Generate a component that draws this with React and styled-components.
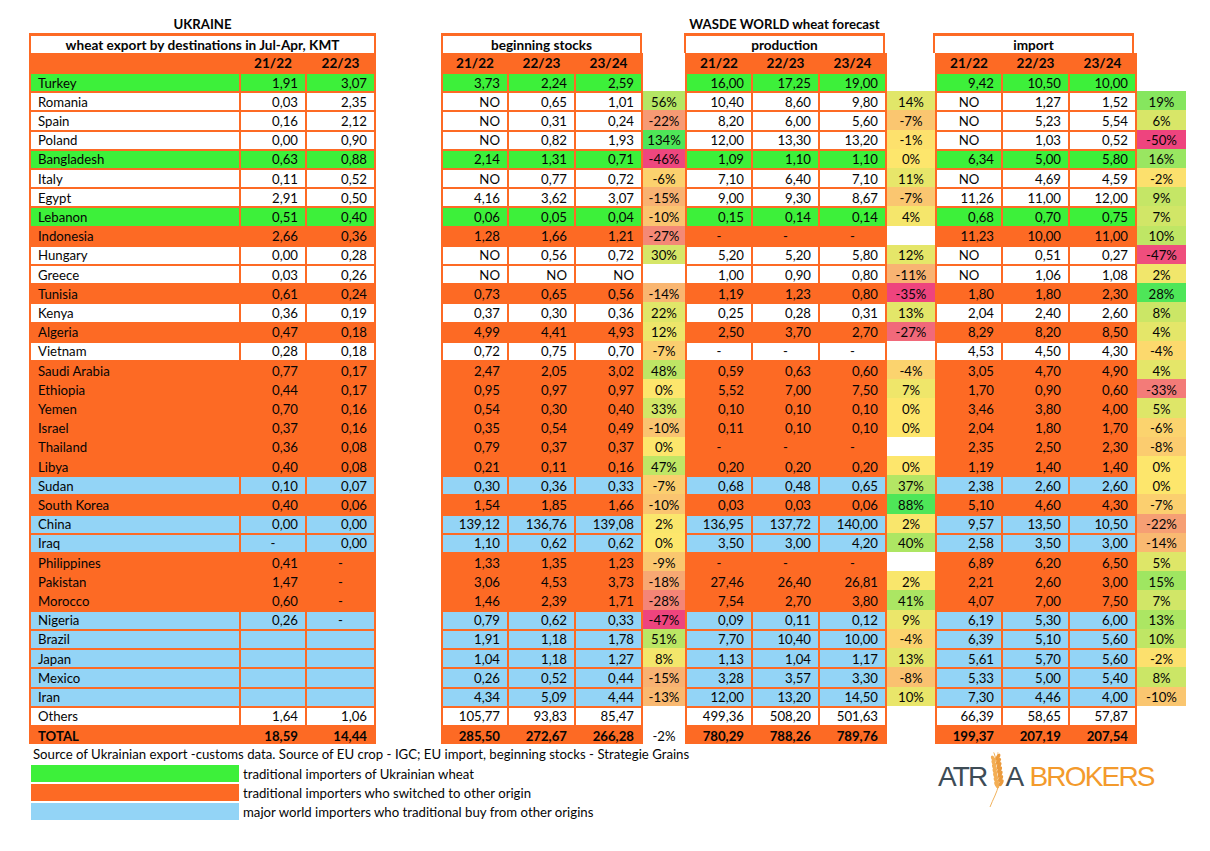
import React from 'react';
import styled, { createGlobalStyle } from 'styled-components';

const ORANGE = '#fd6a24';
const FILL = { g: '#3df03a', o: ORANGE, b: '#93d4f6', w: '#ffffff' };
const ROW_H = 19.21;

const GlobalStyle = createGlobalStyle`
  body {
    margin: 0;
    background: #fff;
  }
`;

const Page = styled.div`
  width: 1210px;
  height: 851px;
  box-sizing: border-box;
  padding: 14px 0 0 29px;
  font-family: Lato, "Open Sans", sans-serif;
  font-size: 13.2px;
  color: #050505;
  overflow: hidden;
`;

const Row = styled.div`
  display: flex;
  height: ${p => p.$h}px;
`;

const Title = styled.div`
  width: ${p => p.$w}px;
  display: flex;
  align-items: center;
  justify-content: center;
  font-weight: 700;
`;

const Spacer = styled.div`
  width: ${p => p.$w}px;
  flex: none;
`;

const Block = styled.div`
  display: flex;
  gap: 2px;
  flex: none;
  background: ${ORANGE};
  padding: ${p => p.$pt}px 2px 0;
  box-sizing: border-box;
`;

const Cell = styled.div`
  width: ${p => p.$w}px;
  flex: none;
  display: flex;
  align-items: center;
  justify-content: ${p => p.$align || 'flex-end'};
  padding: 0 7px;
  box-sizing: border-box;
  background: ${p => p.$bg};
  font-weight: ${p => (p.$bold ? 700 : 400)};
  white-space: nowrap;
`;

const HeadCell = styled(Cell)`
  justify-content: center;
  font-weight: 700;
  font-size: 13.6px;
`;

const Pct = styled.div`
  width: ${p => p.$w}px;
  flex: none;
  display: flex;
  align-items: center;
  justify-content: center;
  padding-top: 2px;
  box-sizing: border-box;
  background: ${p => p.$bg || 'transparent'};
`;

const Footer = styled.div`
  display: flex;
  padding-left: 2px;
`;

const Notes = styled.div`
  width: 907px;
  flex: none;
`;

const Source = styled.div`
  height: 20px;
  display: flex;
  align-items: center;
  padding-left: 2px;
`;

const Legend = styled.div`
  display: flex;
  flex-direction: column;
  gap: 2px;
  padding-top: 1px;
`;

const LegendItem = styled.div`
  display: flex;
  align-items: center;
  height: 17px;
`;

const Swatch = styled.div`
  width: 208px;
  height: 100%;
  background: ${p => p.$bg};
  margin-right: 4px;
`;

const Logo = styled.div`
  display: flex;
  align-items: flex-start;
  padding-top: 10px;
  font-family: "Liberation Sans", Arial, sans-serif;
  font-size: 28px;
  line-height: 28px;
  letter-spacing: -1.8px;
`;

const LogoText = styled.span`
  margin-top: 9px;
  margin-left: ${p => p.$ml || 0}px;
  color: ${p => p.$c};
  white-space: pre;
`;

const UA_W = [208, 64, 67];
const W = [64, 65, 65];
const PCT_W = [42, 48, 49];
const RANGE = [[-47, 134], [-35, 88], [-50, 28]];

const YEL = [253, 230, 108];
const GRN = [78, 230, 88];
const PNK = [238, 68, 126];

const mix = (a, b, t) =>
  `rgb(${a.map((v, i) => Math.round(v + (b[i] - v) * t)).join(',')})`;

const scale = (v, k) => {
  if (v === null) return null;
  const [min, max] = RANGE[k];
  return v >= 0 ? mix(YEL, GRN, v / max) : mix(YEL, PNK, v / min);
};

const rows = [
  ['Turkey', 'g', ['1,91', '3,07'], ['3,73', '2,24', '2,59'], null, ['16,00', '17,25', '19,00'], null, ['9,42', '10,50', '10,00'], null],
  ['Romania', 'w', ['0,03', '2,35'], ['NO', '0,65', '1,01'], 56, ['10,40', '8,60', '9,80'], 14, ['NO', '1,27', '1,52'], 19],
  ['Spain', 'w', ['0,16', '2,12'], ['NO', '0,31', '0,24'], -22, ['8,20', '6,00', '5,60'], -7, ['NO', '5,23', '5,54'], 6],
  ['Poland', 'w', ['0,00', '0,90'], ['NO', '0,82', '1,93'], 134, ['12,00', '13,30', '13,20'], -1, ['NO', '1,03', '0,52'], -50],
  ['Bangladesh', 'g', ['0,63', '0,88'], ['2,14', '1,31', '0,71'], -46, ['1,09', '1,10', '1,10'], 0, ['6,34', '5,00', '5,80'], 16],
  ['Italy', 'w', ['0,11', '0,52'], ['NO', '0,77', '0,72'], -6, ['7,10', '6,40', '7,10'], 11, ['NO', '4,69', '4,59'], -2],
  ['Egypt', 'w', ['2,91', '0,50'], ['4,16', '3,62', '3,07'], -15, ['9,00', '9,30', '8,67'], -7, ['11,26', '11,00', '12,00'], 9],
  ['Lebanon', 'g', ['0,51', '0,40'], ['0,06', '0,05', '0,04'], -10, ['0,15', '0,14', '0,14'], 4, ['0,68', '0,70', '0,75'], 7],
  ['Indonesia', 'o', ['2,66', '0,36'], ['1,28', '1,66', '1,21'], -27, ['-', '-', '-'], null, ['11,23', '10,00', '11,00'], 10],
  ['Hungary', 'w', ['0,00', '0,28'], ['NO', '0,56', '0,72'], 30, ['5,20', '5,20', '5,80'], 12, ['NO', '0,51', '0,27'], -47],
  ['Greece', 'w', ['0,03', '0,26'], ['NO', 'NO', 'NO'], null, ['1,00', '0,90', '0,80'], -11, ['NO', '1,06', '1,08'], 2],
  ['Tunisia', 'o', ['0,61', '0,24'], ['0,73', '0,65', '0,56'], -14, ['1,19', '1,23', '0,80'], -35, ['1,80', '1,80', '2,30'], 28],
  ['Kenya', 'w', ['0,36', '0,19'], ['0,37', '0,30', '0,36'], 22, ['0,25', '0,28', '0,31'], 13, ['2,04', '2,40', '2,60'], 8],
  ['Algeria', 'o', ['0,47', '0,18'], ['4,99', '4,41', '4,93'], 12, ['2,50', '3,70', '2,70'], -27, ['8,29', '8,20', '8,50'], 4],
  ['Vietnam', 'w', ['0,28', '0,18'], ['0,72', '0,75', '0,70'], -7, ['-', '-', '-'], null, ['4,53', '4,50', '4,30'], -4],
  ['Saudi Arabia', 'o', ['0,77', '0,17'], ['2,47', '2,05', '3,02'], 48, ['0,59', '0,63', '0,60'], -4, ['3,05', '4,70', '4,90'], 4],
  ['Ethiopia', 'o', ['0,44', '0,17'], ['0,95', '0,97', '0,97'], 0, ['5,52', '7,00', '7,50'], 7, ['1,70', '0,90', '0,60'], -33],
  ['Yemen', 'o', ['0,70', '0,16'], ['0,54', '0,30', '0,40'], 33, ['0,10', '0,10', '0,10'], 0, ['3,46', '3,80', '4,00'], 5],
  ['Israel', 'o', ['0,37', '0,16'], ['0,35', '0,54', '0,49'], -10, ['0,11', '0,10', '0,10'], 0, ['2,04', '1,80', '1,70'], -6],
  ['Thailand', 'o', ['0,36', '0,08'], ['0,79', '0,37', '0,37'], 0, ['-', '-', '-'], null, ['2,35', '2,50', '2,30'], -8],
  ['Libya', 'o', ['0,40', '0,08'], ['0,21', '0,11', '0,16'], 47, ['0,20', '0,20', '0,20'], 0, ['1,19', '1,40', '1,40'], 0],
  ['Sudan', 'b', ['0,10', '0,07'], ['0,30', '0,36', '0,33'], -7, ['0,68', '0,48', '0,65'], 37, ['2,38', '2,60', '2,60'], 0],
  ['South Korea', 'o', ['0,40', '0,06'], ['1,54', '1,85', '1,66'], -10, ['0,03', '0,03', '0,06'], 88, ['5,10', '4,60', '4,30'], -7],
  ['China', 'b', ['0,00', '0,00'], ['139,12', '136,76', '139,08'], 2, ['136,95', '137,72', '140,00'], 2, ['9,57', '13,50', '10,50'], -22],
  ['Iraq', 'b', ['-', '0,00'], ['1,10', '0,62', '0,62'], 0, ['3,50', '3,00', '4,20'], 40, ['2,58', '3,50', '3,00'], -14],
  ['Philippines', 'o', ['0,41', '-'], ['1,33', '1,35', '1,23'], -9, ['-', '-', '-'], null, ['6,89', '6,20', '6,50'], 5],
  ['Pakistan', 'o', ['1,47', '-'], ['3,06', '4,53', '3,73'], -18, ['27,46', '26,40', '26,81'], 2, ['2,21', '2,60', '3,00'], 15],
  ['Morocco', 'o', ['0,60', '-'], ['1,46', '2,39', '1,71'], -28, ['7,54', '2,70', '3,80'], 41, ['4,07', '7,00', '7,50'], 7],
  ['Nigeria', 'b', ['0,26', '-'], ['0,79', '0,62', '0,33'], -47, ['0,09', '0,11', '0,12'], 9, ['6,19', '5,30', '6,00'], 13],
  ['Brazil', 'b', ['', ''], ['1,91', '1,18', '1,78'], 51, ['7,70', '10,40', '10,00'], -4, ['6,39', '5,10', '5,60'], 10],
  ['Japan', 'b', ['', ''], ['1,04', '1,18', '1,27'], 8, ['1,13', '1,04', '1,17'], 13, ['5,61', '5,70', '5,60'], -2],
  ['Mexico', 'b', ['', ''], ['0,26', '0,52', '0,44'], -15, ['3,28', '3,57', '3,30'], -8, ['5,33', '5,00', '5,40'], 8],
  ['Iran', 'b', ['', ''], ['4,34', '5,09', '4,44'], -13, ['12,00', '13,20', '14,50'], 10, ['7,30', '4,46', '4,00'], -10],
  ['Others', 'w', ['1,64', '1,06'], ['105,77', '93,83', '85,47'], null, ['499,36', '508,20', '501,63'], null, ['66,39', '58,65', '57,87'], null],
];

const total = ['TOTAL', 'o', ['18,59', '14,44'], ['285,50', '272,67', '266,28'], null, ['780,29', '788,26', '789,76'], null, ['199,37', '207,19', '207,54'], null];

const alignOf = (v, centerNo) =>
  v === '-' || (centerNo && v === 'NO') ? 'center' : 'flex-end';

function Section({ vals, bg, bold, centerNo }) {
  return (
    <Block $pt={2}>
      {vals.map((v, i) => (
        <Cell key={i} $w={W[i]} $bg={bg} $bold={bold} $align={alignOf(v, centerNo)}>
          {v}
        </Cell>
      ))}
    </Block>
  );
}

function DataRow({ row, bold, totalPct }) {
  const [name, type, ua, bs, bsP, pr, prP, im, imP] = row;
  const bg = FILL[type];
  const pct = (v, k) => {
    if (v !== null) return <Pct $w={PCT_W[k]} $bg={scale(v, k)}>{v}%</Pct>;
    if (k === 0 && totalPct) return <Pct $w={PCT_W[k]} $bg="#fff">{totalPct}</Pct>;
    return <Pct $w={PCT_W[k]} />;
  };
  return (
    <Row $h={ROW_H}>
      <Block $pt={2}>
        <Cell $w={UA_W[0]} $bg={bg} $bold={bold} $align="flex-start">{name}</Cell>
        {ua.map((v, i) => (
          <Cell key={i} $w={UA_W[i + 1]} $bg={bg} $bold={bold} $align={alignOf(v)}>
            {v}
          </Cell>
        ))}
      </Block>
      <Spacer $w={65} />
      <Section vals={bs} bg={bg} bold={bold} />
      {pct(bsP, 0)}
      <Section vals={pr} bg={bg} bold={bold} />
      {pct(prP, 1)}
      <Section vals={im} bg={bg} bold={bold} centerNo />
      {pct(imP, 2)}
    </Row>
  );
}

function Wheat() {
  const grains = [0, 1, 2, 3, 4, 5, 6];
  return (
    <svg width="17" height="56" viewBox="0 0 17 56" style={{ margin: '-2px 0 0 1px' }}>
      <path d="M2 55 C5 47 9 41 10.5 33 C11.5 25 10 12 6 1" stroke="#f1b25c" strokeWidth="1" fill="none" />
      <path d="M6 1 L4.5 -2 M9 6 L10 0" stroke="#f3c07a" strokeWidth="0.7" fill="none" />
      {grains.map(i => {
        const y = 5 + i * 4.3;
        const cx = 7.5 + i * 0.55;
        return (
          <g key={i}>
            <ellipse cx={cx - 2.1} cy={y + 2} rx="1.8" ry="3.8" fill="#f3ae55" transform={`rotate(-28 ${cx - 2.1} ${y + 2})`} />
            <ellipse cx={cx + 2.4} cy={y} rx="1.8" ry="3.8" fill="#eb9a3c" transform={`rotate(28 ${cx + 2.4} ${y})`} />
          </g>
        );
      })}
    </svg>
  );
}

export default function App() {
  return (
    <>
      <GlobalStyle />
      <Page>
        <Row $h={19}>
          <Title $w={347}>UKRAINE</Title>
          <Spacer $w={308} />
          <Title $w={201}>WASDE WORLD wheat forecast</Title>
        </Row>

        <Row $h={20}>
          <Block $pt={3}>
            <HeadCell $w={343} $bg="#fff">wheat export by destinations in Jul-Apr, KMT</HeadCell>
          </Block>
          <Spacer $w={65} />
          <Block $pt={3}>
            <HeadCell $w={197} $bg="#fff">beginning stocks</HeadCell>
          </Block>
          <Spacer $w={PCT_W[0]} />
          <Block $pt={3}>
            <HeadCell $w={197} $bg="#fff">production</HeadCell>
          </Block>
          <Spacer $w={PCT_W[1]} />
          <Block $pt={3}>
            <HeadCell $w={197} $bg="#fff">import</HeadCell>
          </Block>
        </Row>

        <Row $h={19}>
          <Block $pt={0}>
            <HeadCell $w={UA_W[0]} $bg={ORANGE} />
            <HeadCell $w={UA_W[1]} $bg={ORANGE}>21/22</HeadCell>
            <HeadCell $w={UA_W[2]} $bg={ORANGE}>22/23</HeadCell>
          </Block>
          <Spacer $w={65} />
          {[0, 1, 2].map(k => (
            <React.Fragment key={k}>
              <Block $pt={0}>
                {['21/22', '22/23', '23/24'].map((y, i) => (
                  <HeadCell key={y} $w={W[i]} $bg={ORANGE}>{y}</HeadCell>
                ))}
              </Block>
              <Spacer $w={PCT_W[k]} />
            </React.Fragment>
          ))}
        </Row>

        {rows.map(r => (
          <DataRow key={r[0]} row={r} />
        ))}
        <DataRow row={total} bold totalPct="-2%" />

        <Footer>
          <Notes>
            <Source>
              Source of Ukrainian export -customs data. Source of EU crop - IGC; EU import, beginning stocks - Strategie Grains
            </Source>
            <Legend>
              <LegendItem>
                <Swatch $bg={FILL.g} />
                traditional importers of Ukrainian wheat
              </LegendItem>
              <LegendItem>
                <Swatch $bg={FILL.o} />
                traditional importers who switched to other origin
              </LegendItem>
              <LegendItem>
                <Swatch $bg={FILL.b} />
                major world importers who traditional buy from other origins
              </LegendItem>
            </Legend>
          </Notes>
          <Logo>
            <LogoText $c="#3e4c56">ATR</LogoText>
            <Wheat />
            <LogoText $c="#3e4c56" $ml={1}>A</LogoText>
            <LogoText $c="#f39a2c" $ml={7}>BROKERS</LogoText>
          </Logo>
        </Footer>
      </Page>
    </>
  );
}
